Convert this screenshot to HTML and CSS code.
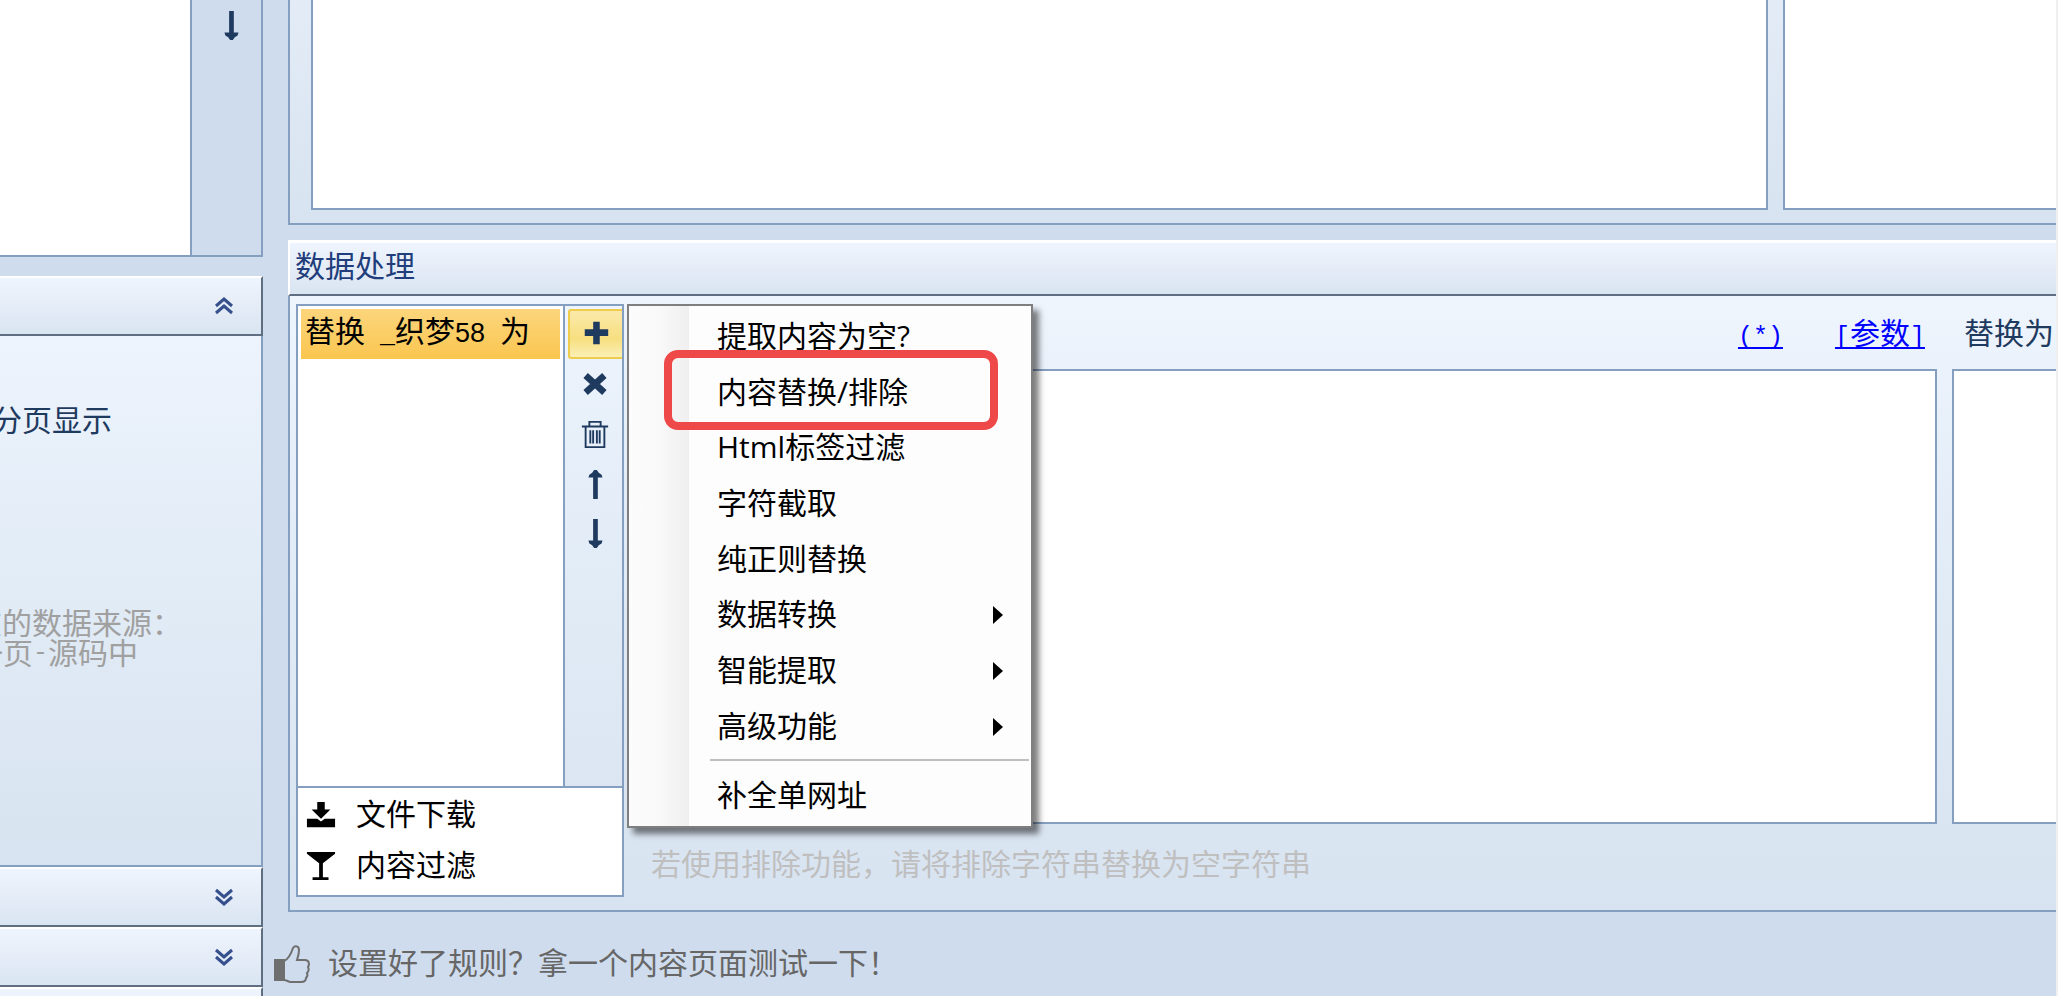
FILE: index.html
```
<!DOCTYPE html>
<html lang="zh-CN">
<head>
<meta charset="UTF-8">
<title>数据处理</title>
<link rel="stylesheet" href="styles.css">
</head>
<body>
<div class="app">
	<!-- 左侧栏 -->
	<aside class="side">
		<div class="sideTop">
			<div class="sideList"></div>
			<div class="sideTools">
				<button type="button" class="tool" aria-label="下移">
					<svg class="icon" viewBox="0 0 32 32"><path d="M14 0h5v23h5l-1 3-3 2-2 3h-3l-2-3-3-2-1-3h5z"/></svg>
				</button>
			</div>
		</div>
		<button type="button" class="bar barOpen" aria-label="收起">
			<svg class="chevron" viewBox="0 0 18 18"><path d="M1 9l8-7 8 7M1 16l8-7 8 7"/></svg>
		</button>
		<div class="sideBody">
			<div class="clip sideLabel">分页显示</div>
			<div class="clip sideHint">在的数据来源：</div>
			<div class="clip sideHint sideHintLast">一页<span class="half">-</span>源码中</div>
		</div>
		<button type="button" class="bar" aria-label="展开">
			<svg class="chevron" viewBox="0 0 18 18"><path d="M1 2l8 7 8-7M1 9l8 7 8-7"/></svg>
		</button>
		<button type="button" class="bar" aria-label="展开">
			<svg class="chevron" viewBox="0 0 18 18"><path d="M1 2l8 7 8-7M1 9l8 7 8-7"/></svg>
		</button>
		<div class="bar"></div>
	</aside>

	<!-- 右侧主区域 -->
	<main class="main">
		<section class="topPanel">
			<textarea class="box boxWide" aria-label="内容"></textarea>
			<textarea class="box boxCut" aria-label="结果"></textarea>
		</section>

		<h2 class="title">数据处理</h2>
		<section class="panel">
			<div class="rules">
				<div class="rulesTop">
					<ul class="ruleList">
						<li class="selected">替换<span class="half"> _</span>织梦<span class="digits">58</span><span class="half"> </span>为</li>
					</ul>
					<div class="ruleTools">
						<button type="button" class="tool toolOn" aria-label="添加">
							<svg class="icon" viewBox="0 0 32 32"><path d="M13 3h7v8h9v7h-9v9h-7v-9H4v-7h9z"/></svg>
						</button>
						<button type="button" class="tool" aria-label="移除">
							<svg class="icon cross" viewBox="0 0 32 32"><path d="M6 7l20 18M26 7L6 25"/></svg>
						</button>
						<button type="button" class="tool" aria-label="清空">
							<svg class="icon line" viewBox="0 0 32 32"><path d="M2 8h28M10 7V3h12v4M6 9v21h20V9M11 12v14M14 12v14M18 12v14M21 12v14"/></svg>
						</button>
						<button type="button" class="tool" aria-label="上移">
							<svg class="icon" viewBox="0 0 32 32"><path d="M14 32h5V9h5l-1-3-3-2-2-3h-3l-2 3-3 2-1 3h5z"/></svg>
						</button>
						<button type="button" class="tool" aria-label="下移">
							<svg class="icon" viewBox="0 0 32 32"><path d="M14 0h5v23h5l-1 3-3 2-2 3h-3l-2-3-3-2-1-3h5z"/></svg>
						</button>
					</div>
				</div>
				<ul class="extra">
					<li>
						<svg class="icon" viewBox="0 0 32 32"><path d="M12 2h8v8h6l-4 4-6 6-6-6-4-4h6zM1 20h11l4 3 4-3h11v9H1z"/></svg>
						<span>文件下载</span>
					</li>
					<li>
						<svg class="icon" viewBox="0 0 32 32"><path d="M1 1h30v2L18 13v15h6v3H7v-3h7V13L1 3z"/></svg>
						<span>内容过滤</span>
					</li>
				</ul>
			</div>
			<div class="editor">
				<div class="fields">
					<div class="field fieldWide">
						<div class="fieldHead">
							<a href="#"><span class="half">(*)</span></a>
							<a href="#"><span class="half">[</span>参数<span class="half">]</span></a>
						</div>
						<textarea class="box" aria-label="替换内容"></textarea>
					</div>
					<div class="field fieldCut">
						<label class="fieldHead fieldName" for="target">替换为</label>
						<textarea class="box" id="target"></textarea>
					</div>
				</div>
				<p class="note">若使用排除功能，请将排除字符串替换为空字符串</p>
			</div>

			<!-- 弹出菜单 -->
			<div class="menu">
				<button type="button">提取内容为空?</button>
				<button type="button" class="marked">内容替换/排除</button>
				<button type="button">Html标签过滤</button>
				<button type="button">字符截取</button>
				<button type="button">纯正则替换</button>
				<button type="button" class="more">数据转换</button>
				<button type="button" class="more">智能提取</button>
				<button type="button" class="more">高级功能</button>
				<hr>
				<button type="button">补全单网址</button>
			</div>
		</section>

		<footer class="foot">
			<svg class="thumb" viewBox="0 0 38 40"><path class="cuff" d="M1 16h9v20H1z"/><path d="M10 17c5-2 7-7 9-13 2-3 6-2 6 2 0 4-1 7-2 10h8c4 0 5 4 3 7 1 2 1 4-1 6 1 2 0 4-1 5 0 3-2 4-5 4H17c-3 0-4-2-7-2M1 16h9v20H1z"/></svg>
			<span>设置好了规则？拿一个内容页面测试一下！</span>
		</footer>
	</main>
</div>
</body>
</html>
```
FILE: styles.css
```
*, *::before{box-sizing:border-box;}

body{margin:0; height:100vh; overflow:hidden; background-color:#cfdced;
	font-family:"Liberation Sans","Noto Sans CJK SC",sans-serif; font-size:30px; line-height:32px; color:#1f3a5f;
	border-right:2px solid #f0f0f0;}

ul, p, h2{margin:0; padding:0; list-style:none; font-size:30px; font-weight:normal;}
button{margin:0; padding:0; border:0; background:none; font:inherit; color:inherit;}
a{color:#0000ff; text-decoration-thickness:2px; text-underline-offset:3px; text-decoration-skip-ink:none;}

.app{display:flex; height:100%; overflow:hidden;}
.icon{display:block; width:30px; height:30px; fill:#1f3a5f;}
.line{fill:none; stroke:#1f3a5f; stroke-width:2;}
.cross{fill:none; stroke:#1f3a5f; stroke-width:7;}

/* 半角字符占半个汉字宽 */
.half{font-family:"Liberation Mono",monospace; font-size:25px; white-space:pre;}
.digits{font-size:27px;}

/* 左侧栏 */
.side{width:263px; flex:none; display:flex; flex-direction:column;}
.sideTop{display:flex; height:257px; flex:none; margin-bottom:19px;
	border-right:2px solid #849fc0; border-bottom:2px solid #849fc0;}
.sideList{flex:1; background-color:#fff;}
.sideTools{width:71px; padding:10px 0 0 9px; border-left:2px solid #849fc0;}

.bar{display:flex; align-items:center; justify-content:flex-end; height:60px; flex:none; padding-right:28px;
	border-top:2px solid #fff; border-right:2px solid #5f6f81; border-bottom:2px solid #5f6f81;
	background:linear-gradient(#eef5fe, #e7eef8 40%, #d9e5f2);}
.chevron{display:block; width:18px; height:18px; fill:none; stroke:#35508c; stroke-width:3;}

.sideBody{flex:none; height:531px; padding-top:69px; border-right:2px solid #849fc0; border-bottom:2px solid #849fc0;
	background:linear-gradient(#edf4fd, #e8f0fa 20%, #e3edf7 40%, #d8e3f1);}

/* 左边被裁掉的文字靠右对齐 */
.clip{display:flex; justify-content:flex-end; white-space:nowrap; overflow:hidden;}
.sideLabel{width:112px;}
.sideHint{width:182px; margin-top:172px; line-height:30px; color:#a0a0a0;}
.sideHintLast{width:138px; margin-top:0;}

/* 右侧 */
.main{flex:1; min-width:0; margin-left:25px; display:flex; flex-direction:column;}
.box{display:block; width:100%; margin:0; padding:8px; border:2px solid #849fc0; border-radius:0;
	background-color:#fff; resize:none; outline:none; font:inherit;}

.topPanel{display:flex; gap:15px; height:225px; flex:none; padding:0 0 13px 21px; margin-bottom:15px;
	border-left:2px solid #849fc0; border-bottom:2px solid #849fc0;
	background:linear-gradient(#e3ecf6, #d8e3f1);}
.topPanel .box{border-top:0;}
.boxWide{flex:1;}
.topPanel .boxCut{width:273px; flex:none; border-right:0;}

.title{height:56px; flex:none; padding:7px 5px; line-height:34px; color:#213d7b;
	border-top:3px solid #fff; border-left:2px solid #fff; border-bottom:2px solid #5f6f81;
	background:linear-gradient(#eef5fe, #e7eef8 40%, #d9e5f2);}

.panel{position:relative; display:flex; height:616px; flex:none; padding:8px 0 13px 6px;
	border-left:2px solid #849fc0; border-bottom:2px solid #849fc0;
	background:linear-gradient(#eef5fd, #e8f0fa 20%, #e2ecf6 45%, #d8e3f1);}

/* 规则列表 */
.rules{width:328px; flex:none; display:flex; flex-direction:column; border:2px solid #849fc0;}
.rulesTop{flex:1; display:flex;}
.ruleList{flex:1; padding:3px; background-color:#fff; color:#000;}
.selected{height:50px; padding-left:4px; line-height:46px; white-space:pre;
	background:linear-gradient(#fcd57c, #fac650);}
.ruleTools{width:59px; padding:3px 0 0 3px; border-left:2px solid #849fc0;}
.tool{display:flex; align-items:center; justify-content:center; width:54px; height:50px;}
.sideTools .tool{height:32px; width:60px;}
.toolOn{border:2px solid #f0cc4c; border-right:0; border-radius:3px 0 0 3px;
	background:linear-gradient(#fbe9ab, #f7df80 60%, #faefb5);}
.extra{height:109px; padding:1px 8px; border-top:2px solid #849fc0; background-color:#fff; color:#000;}
.extra li{display:flex; align-items:center; gap:20px; height:51px; line-height:40px;}
.extra .icon{fill:#000;}

/* 编辑区 */
.editor{flex:1; min-width:0; padding-left:24px;}
.fields{display:flex; gap:15px;}
.field .box{height:455px;}
.fieldWide{flex:1;}
.fieldCut{width:104px; flex:none;}
.fieldCut .box{border-right:0;}
.fieldHead{display:flex; justify-content:flex-end; gap:52px; height:65px; padding:14px 12px 0 0;}
.fieldName{justify-content:flex-start; padding-left:12px; padding-right:0; white-space:nowrap;}
.note{padding:25px 0 0 3px; color:#bfbfbf;}

/* 弹出菜单 */
.menu{position:absolute; left:337px; top:8px; display:flex; flex-direction:column; width:406px; height:524px;
	padding:2px 0 3px; color:#000; border:2px solid #7f7f7f; box-shadow:6px 6px 6px rgba(0,0,0,.5);
	font-family:"Open Sans","Noto Sans CJK SC",sans-serif;
	background:linear-gradient(90deg, #fcfcfc, #f9f9f9 30px, #efefef 60px, #fdfdfd 60px);}
.menu button{position:relative; flex:1; padding-left:88px; text-align:left;}
.menu hr{width:319px; height:2px; margin:6px 2px 6px auto; border:0; background-color:#bfbfbf;}
.more::after{content:""; position:absolute; right:28px; top:20px;
	border-left:10px solid #000; border-top:9px solid transparent; border-bottom:9px solid transparent;}
/* 红色标记框 */
.marked::before{content:""; position:absolute; left:35px; top:-14px; width:334px; height:80px;
	border:8px solid #ee4848; border-radius:14px;}

.foot{display:flex; align-items:center; gap:16px; height:52px; margin-top:26px; color:#666;}
.thumb{width:38px; height:40px; margin-left:-14px; fill:none; stroke:#6f6f6f; stroke-width:2;}
.cuff{fill:#6f6f6f;}
```
